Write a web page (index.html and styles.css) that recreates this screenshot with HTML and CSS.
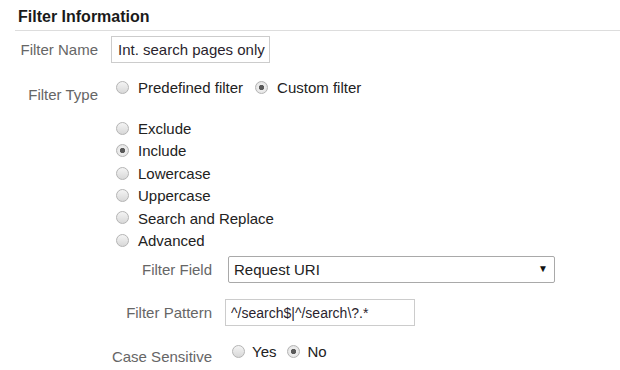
FILE: index.html
```html
<!DOCTYPE html>
<html>
<head>
    <meta charset="UTF-8" />
    <title>Filter Information</title>
    <link rel="stylesheet" href="styles.css">
</head>
<body>
    <div class="page">
        <div class="section-head">
            <h2>Filter Information</h2>
        </div>

        <div class="row name-row">
            <label class="main-label" for="filter-name">Filter Name</label>
            <input type="text" id="filter-name" class="text-input name-input" value="Int. search pages only">
        </div>

        <div class="row type-row">
            <span class="main-label low">Filter Type</span>
            <div class="inline-radios">
                <label class="opt"><input type="radio" name="ftype"> Predefined filter</label>
                <label class="opt"><input type="radio" name="ftype" checked> Custom filter</label>
            </div>
        </div>

        <div class="radio-list">
            <label class="opt"><input type="radio" name="kind"> Exclude</label>
            <label class="opt"><input type="radio" name="kind" checked> Include</label>
            <label class="opt"><input type="radio" name="kind"> Lowercase</label>
            <label class="opt"><input type="radio" name="kind"> Uppercase</label>
            <label class="opt"><input type="radio" name="kind"> Search and Replace</label>
            <label class="opt"><input type="radio" name="kind"> Advanced</label>
        </div>

        <div class="row field-row">
            <label class="sub-label" for="filter-field">Filter Field</label>
            <div class="select-wrap">
                <select id="filter-field">
                    <option>Request URI</option>
                    <option>Hostname</option>
                    <option>Page Title</option>
                </select>
            </div>
        </div>

        <div class="row pattern-row">
            <label class="sub-label" for="filter-pattern">Filter Pattern</label>
            <input type="text" id="filter-pattern" class="text-input pattern-input" value="^/search$|^/search\?.*">
        </div>

        <div class="row case-row">
            <span class="sub-label low">Case Sensitive</span>
            <div class="inline-radios case-radios">
                <label class="opt"><input type="radio" name="case"> Yes</label>
                <label class="opt"><input type="radio" name="case" checked> No</label>
            </div>
        </div>
    </div>
</body>
</html>
```

FILE: styles.css
```css
body {
    margin: 0;
    background: #ffffff;
    color: #222222;
    font-family: 'Liberation Sans', Arial, sans-serif;
    font-size: 15px;
}
.page {
    padding-top: 7px;
}
.section-head {
    margin-left: 15px;
    padding-left: 3px;
    padding-bottom: 3px;
    border-bottom: 1px solid #dddddd;
}
h2 {
    margin: 0;
    font-size: 16px;
    line-height: 20px;
    font-weight: bold;
    color: #1a1a1a;
}
.row {
    display: flex;
    align-items: flex-start;
}
.main-label {
    width: 98px;
    flex: none;
    text-align: right;
    color: #666666;
    line-height: 27px;
}
.sub-label {
    width: 212px;
    flex: none;
    text-align: right;
    color: #666666;
    line-height: 27px;
}
.low {
    line-height: 20px;
    padding-top: 7px;
}
.case-row .low { padding-top: 5px; }

.text-input {
    box-sizing: border-box;
    height: 27px;
    border: 1px solid #cccccc;
    border-radius: 0;
    padding: 0 0 0 6px;
    font-family: inherit;
    font-size: 15px;
    color: #2a1f2e;
    background: #fff;
    outline: none;
}
.name-row { margin-top: 5px; }
.name-input {
    margin-left: 13px;
    width: 159px;
}
.type-row { margin-top: 15px; }
.inline-radios {
    display: flex;
    margin-left: 18px;
}
.inline-radios .opt { margin-right: 12px; }
.opt {
    display: flex;
    align-items: center;
    line-height: 20px;
    color: #222222;
}
.radio-list {
    margin-top: 13px;
    margin-left: 116px;
}
.radio-list .opt { line-height: 22.4px; }

input[type="radio"] {
    -webkit-appearance: none;
    appearance: none;
    width: 13px;
    height: 13px;
    margin: 0 9px 0 0;
    border: 1px solid #b4b4b4;
    border-radius: 50%;
    background: linear-gradient(#f4f4f4, #d8d8d8);
    box-sizing: border-box;
    position: relative;
    top: -1px;
}
input[type="radio"]:checked {
    background: radial-gradient(circle, #5a5a5a 0, #5a5a5a 2.3px, #eeeeee 3px, #dcdcdc 100%);
}

.field-row { margin-top: 4px; }
.select-wrap {
    position: relative;
    margin-left: 16px;
}
.select-wrap select {
    -webkit-appearance: none;
    appearance: none;
    box-sizing: border-box;
    width: 327px;
    height: 27px;
    border: 1px solid #a9a9a9;
    border-radius: 2px;
    padding: 0 0 0 5px;
    font-family: inherit;
    font-size: 15px;
    color: #222;
    background: #fff;
    outline: none;
}
.select-wrap::after {
    content: "\25BC";
    position: absolute;
    right: 7px;
    top: 7px;
    font-size: 10px;
    color: #111;
    pointer-events: none;
}
.pattern-row { margin-top: 16px; }
.pattern-input {
    margin-left: 13px;
    width: 190px;
    font-size: 14px;
    padding-left: 5px;
}
.case-row { margin-top: 16px; }
.case-radios { margin-left: 20px; }
.case-radios .opt { margin-right: 11px; }
.case-radios input[type="radio"] { margin-right: 7px; }
```
